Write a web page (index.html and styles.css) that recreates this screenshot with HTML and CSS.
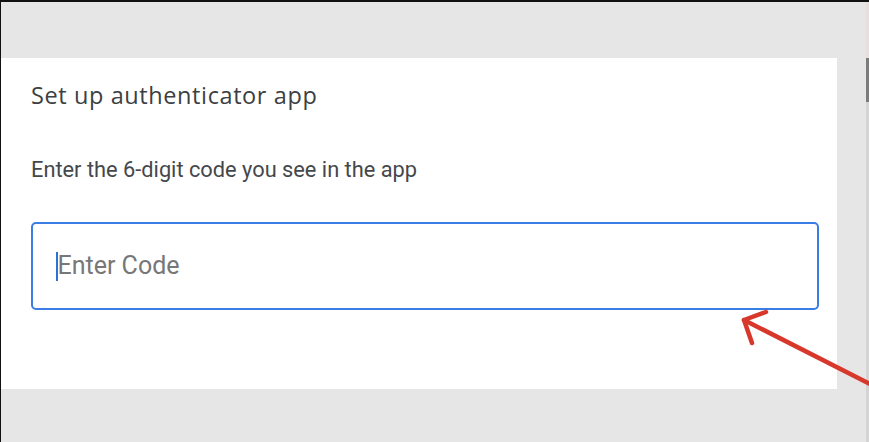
FILE: index.html
```html
<!DOCTYPE html>
<html lang="en">
<head>
<meta charset="utf-8">
<title>Set up authenticator app</title>
<link rel="stylesheet" href="styles.css">
</head>
<body>
<div class="screen">
  <div class="main">
    <section class="panel">
      <h1 class="title">Set up authenticator app</h1>
      <p class="hint">Enter the 6-digit code you see in the app</p>
      <div class="code-field">
        <span class="caret"></span>
        <span class="placeholder">Enter Code</span>
      </div>
    </section>
  </div>
  <div class="edge">
    <div class="edge-top"></div>
    <div class="edge-thumb"></div>
    <div class="edge-track"></div>
  </div>
  <svg class="annotation" width="869" height="442" viewBox="0 0 869 442" aria-hidden="true">
    <g fill="none" stroke="#d8372c" stroke-width="4.5" stroke-linecap="round" stroke-linejoin="round">
      <path d="M872 385 L744 320"/>
      <path d="M766 312 L744 320 L752 343"/>
    </g>
  </svg>
</div>
</body>
</html>
```
FILE: styles.css
```css
html, body {
  margin: 0;
  padding: 0;
}
body {
  background: #e6e6e6;
  width: 869px;
  height: 442px;
  overflow: hidden;
}
.screen {
  position: relative;
  box-sizing: border-box;
  width: 869px;
  height: 442px;
  border-top: 2px solid #111;
  border-left: 1px solid #111;
  background: #e6e6e6;
  display: flex;
}
.main {
  flex: 1;
}
.panel {
  box-sizing: border-box;
  margin-top: 56px;
  width: 836px;
  height: 331px;
  background: #fff;
  padding: 23px 0 0 30px;
}
.title {
  margin: 0;
  font-family: "Open Sans", "Noto Sans", sans-serif;
  font-weight: 400;
  font-size: 23.5px;
  letter-spacing: 0.6px;
  line-height: 28px;
  color: #3c4043;
}
.hint {
  margin: 49px 0 0;
  font-family: Roboto, "Liberation Sans", sans-serif;
  font-size: 21.8px;
  line-height: 24px;
  color: #45484b;
}
.code-field {
  box-sizing: border-box;
  margin-top: 40px;
  width: 788px;
  height: 88px;
  border: 2px solid #3a7de4;
  border-radius: 5px;
  display: flex;
  align-items: center;
  padding-left: 23px;
  font-family: Roboto, "Liberation Sans", sans-serif;
  font-size: 25px;
  color: #777;
}
.caret {
  width: 1.5px;
  height: 29px;
  background: #2f6fd6;
}
.placeholder {
  line-height: 30px;
}
.edge {
  width: 3px;
  display: flex;
  flex-direction: column;
}
.edge-top {
  height: 56px;
  background: #e9dede;
}
.edge-thumb {
  height: 44px;
  background: #7c7c7c;
}
.edge-track {
  flex: 1;
  background: #d4d4d4;
}
.annotation {
  position: absolute;
  left: -1px;
  top: -2px;
  pointer-events: none;
}
```
